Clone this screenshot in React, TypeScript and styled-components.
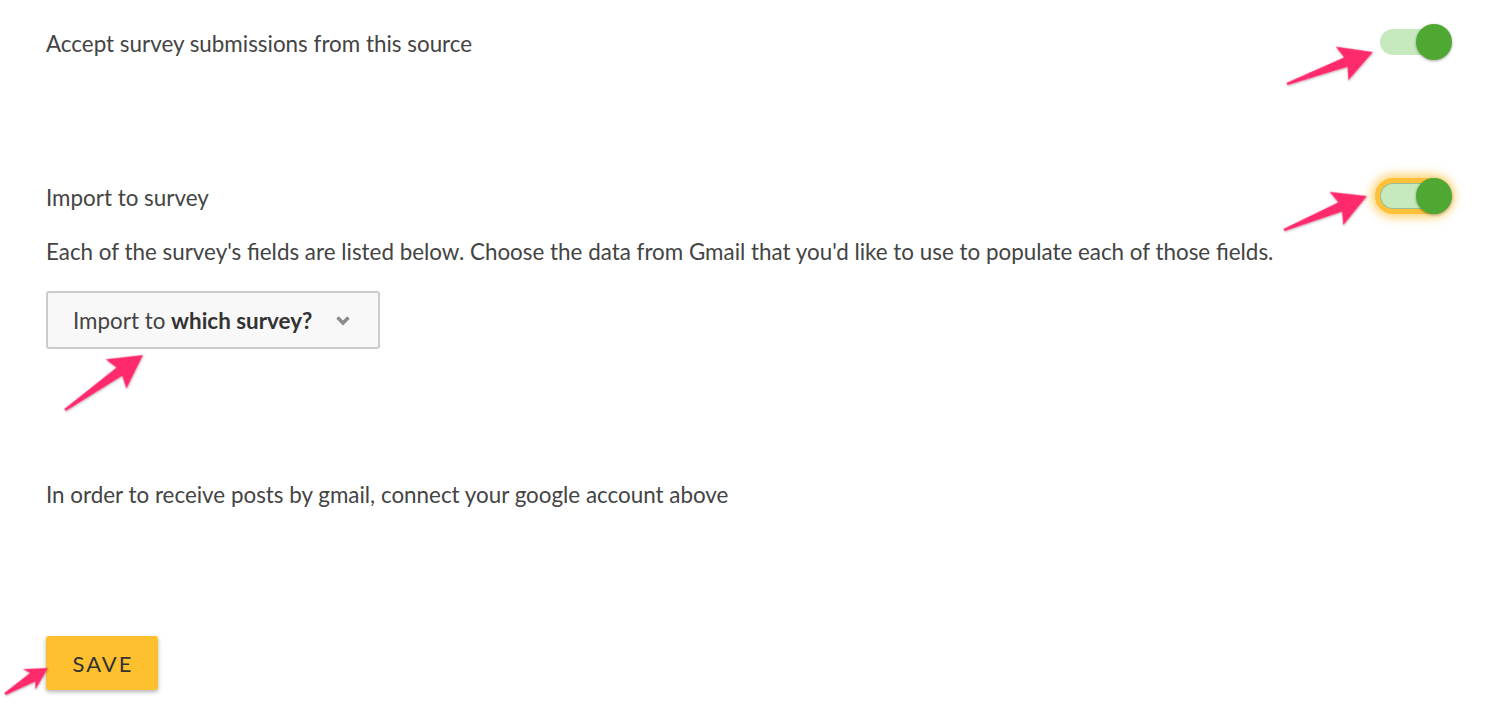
import React from "react";
import styled, { createGlobalStyle, css } from "styled-components";

const GlobalStyle = createGlobalStyle`
  html, body { margin: 0; padding: 0; background: #ffffff; }
  body { font-family: Lato, "Open Sans", "Liberation Sans", sans-serif; color: #444444; }
`;

const Page = styled.div`
  position: relative;
  width: 1510px;
  height: 704px;
  box-sizing: border-box;
  padding: 24px 58px 0 46px;
  display: flex;
  flex-direction: column;
  overflow: hidden;
`;

const SettingRow = styled.div<{ $top?: number }>`
  display: flex;
  align-items: center;
  justify-content: space-between;
  height: 36px;
  margin-top: ${(p) => p.$top ?? 0}px;
`;

const Label = styled.span`
  font-size: 22.4px;
  line-height: 27px;
  padding-top: 3px;
`;

const Text = styled.p<{ $top: number }>`
  margin: ${(p) => p.$top}px 0 0;
  font-size: 22.4px;
  line-height: 27px;
`;

const ToggleWrap = styled.div`
  position: relative;
  width: 72px;
  height: 36px;
  display: flex;
  align-items: center;
`;

const Track = styled.div<{ $focused?: boolean }>`
  width: 66px;
  height: 26px;
  border-radius: 13px;
  background: #c6e9bd;
  box-sizing: border-box;
  ${(p) =>
    p.$focused &&
    css`
      border: 1px solid rgba(80, 110, 80, 0.35);
      box-shadow: 0 0 0 5px #fdc13a, 0 0 8px 9px rgba(253, 193, 58, 0.65);
    `}
`;

const Knob = styled.div`
  position: absolute;
  right: 0;
  top: 0;
  width: 36px;
  height: 36px;
  border-radius: 50%;
  background: #4fa832;
  box-shadow: 0 1px 3px rgba(0, 0, 0, 0.35);
`;

const Toggle = ({ focused }: { focused?: boolean }) => (
  <ToggleWrap>
    <Track $focused={focused} />
    <Knob />
  </ToggleWrap>
);

const Select = styled.button`
  margin-top: 26px;
  align-self: flex-start;
  width: 334px;
  height: 58px;
  box-sizing: border-box;
  display: flex;
  align-items: center;
  justify-content: space-between;
  padding: 0 27px 0 25px;
  background: #f8f8f8;
  border: 2px solid #cccccc;
  border-radius: 3px;
  font-family: Lato, "Open Sans", "Liberation Sans", sans-serif;
  font-size: 22.4px;
  color: #444444;
  cursor: pointer;
  b { font-weight: 700; color: #333333; }
`;

const SaveButton = styled.button`
  margin-top: 128px;
  align-self: flex-start;
  width: 112px;
  height: 54px;
  border: none;
  border-radius: 3px;
  background: #fec02f;
  box-shadow: 0 2px 4px rgba(0, 0, 0, 0.3);
  font-family: Lato, "Open Sans", "Liberation Sans", sans-serif;
  font-size: 22px;
  letter-spacing: 2px;
  color: #333333;
  padding: 0 0 0 2px;
`;

const Overlay = styled.svg`
  position: absolute;
  left: 0;
  top: 0;
  pointer-events: none;
`;

type ArrowProps = { x1: number; y1: number; x2: number; y2: number; head?: number; half?: number };

const Arrow = ({ x1, y1, x2, y2, head = 33, half = 18 }: ArrowProps) => {
  const dx = x2 - x1;
  const dy = y2 - y1;
  const L = Math.hypot(dx, dy);
  const ang = (Math.atan2(dy, dx) * 180) / Math.PI;
  const b = L - head;
  const pts = [
    [0, -1.2],
    [b + 4, -5],
    [b, -half],
    [L, 0],
    [b, half],
    [b + 4, 5],
    [0, 1.2],
  ]
    .map((p) => p.join(","))
    .join(" ");
  return (
    <polygon
      points={pts}
      transform={`translate(${x1} ${y1}) rotate(${ang})`}
      fill="#ff2b6c"
      filter="url(#arrowShadow)"
    />
  );
};

export default function App() {
  return (
    <>
      <GlobalStyle />
      <Page>
        <SettingRow>
          <Label>Accept survey submissions from this source</Label>
          <Toggle />
        </SettingRow>
        <SettingRow $top={118}>
          <Label>Import to survey</Label>
          <Toggle focused />
        </SettingRow>
        <Text $top={24}>
          Each of the survey's fields are listed below. Choose the data from Gmail that you'd like to use to populate each of those fields.
        </Text>
        <Select>
          <span>
            Import to <b>which survey?</b>
          </span>
          <svg width="16" height="11" viewBox="0 0 16 11">
            <polyline points="2.5,2.5 8,8 13.5,2.5" fill="none" stroke="#8a8a8a" strokeWidth="3.4" />
          </svg>
        </Select>
        <Text $top={132}>In order to receive posts by gmail, connect your google account above</Text>
        <SaveButton>SAVE</SaveButton>
        <Overlay width="1510" height="704" viewBox="0 0 1510 704">
          <defs>
            <filter id="arrowShadow" x="-20%" y="-20%" width="140%" height="140%">
              <feDropShadow dx="0" dy="1" stdDeviation="1" floodColor="#000" floodOpacity="0.3" />
            </filter>
          </defs>
          <Arrow x1={1287} y1={84} x2={1373} y2={52} />
          <Arrow x1={1284} y1={230} x2={1367} y2={196} />
          <Arrow x1={65} y1={410} x2={143} y2={355} />
          <Arrow x1={5} y1={694} x2={48} y2={668} head={22} half={12} />
        </Overlay>
      </Page>
    </>
  );
}
